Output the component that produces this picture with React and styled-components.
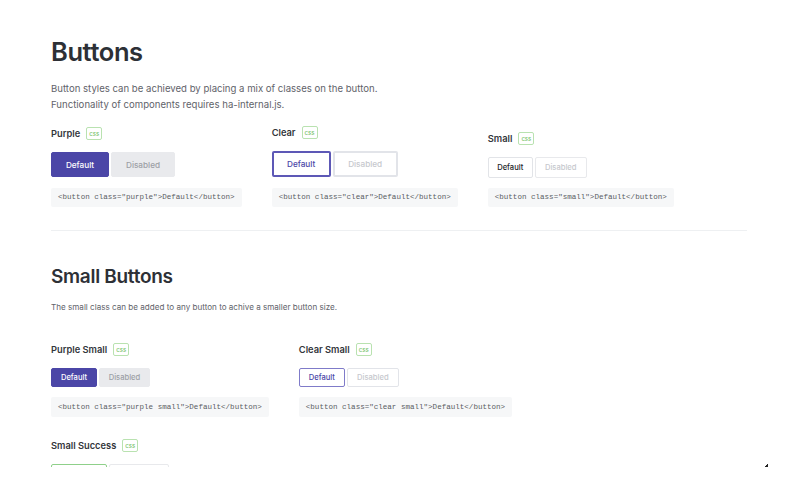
import styled, { createGlobalStyle, css } from 'styled-components';

const GlobalStyle = createGlobalStyle`
  * { box-sizing: border-box; }
  body {
    margin: 0;
    background: #ffffff;
    font-family: Inter, "Noto Sans", sans-serif;
    color: #2d3036;
  }
`;

const Frame = styled.div`
  position: relative;
  height: 467px;
  overflow: hidden;
  padding: 37px 51px 0;
`;

const Title = styled.h1`
  margin: 0 0 14px;
  font-size: 25.5px;
  line-height: 30px;
  font-weight: 600;
  letter-spacing: -0.4px;
  color: #2d3036;
`;

const Subtitle = styled.h2`
  margin: 34px 0 10px;
  font-size: 19px;
  line-height: 24px;
  font-weight: 600;
  letter-spacing: -0.3px;
  color: #2d3036;
`;

const Lead = styled.p`
  margin: 0 0 ${p => p.$after}px;
  font-size: ${p => p.$size}px;
  line-height: 16px;
  color: #5f636a;
`;

const Row = styled.div`
  display: flex;
  flex-wrap: wrap;
  align-items: flex-end;
  column-gap: 30px;
  row-gap: 21px;
`;

const Example = styled.div`
  display: flex;
  flex-direction: column;
  align-items: flex-start;
`;

const Label = styled.div`
  display: flex;
  align-items: center;
  gap: 6px;
  height: 14px;
  margin-bottom: 12px;
  font-size: 9.3px;
  font-weight: 600;
  color: #33363b;
`;

const Badge = styled.span`
  display: inline-flex;
  align-items: center;
  justify-content: center;
  width: 16px;
  height: 13px;
  border: 1px solid #b9e2b0;
  border-radius: 2px;
  font-size: 6px;
  font-weight: 500;
  color: #78c36b;
`;

const Group = styled.div`
  display: flex;
  gap: 2px;
  margin-bottom: ${p => p.$after}px;
`;

const sizes = {
  large: css`height: 25px; font-size: 8.2px;`,
  clear: css`height: 26px; font-size: 8.2px;`,
  small: css`height: 21px; font-size: 7.6px;`,
  tiny: css`height: 19px; font-size: 7.6px;`,
};

const variants = {
  purple: css`
    background: #4b46a7;
    color: #ffffff;
    border: 1px solid #4b46a7;
  `,
  purpleOff: css`
    background: #e9eaed;
    color: #9c9fa5;
    border: 1px solid #e9eaed;
  `,
  clear: css`
    background: #ffffff;
    color: #4b46a7;
    border: 2px solid #5d58b6;
  `,
  clearOff: css`
    background: #ffffff;
    color: #c6c8cd;
    border: 2px solid #e2e4e9;
  `,
  clearThin: css`
    background: #ffffff;
    color: #4b46a7;
    border: 1px solid #7f7bc9;
  `,
  clearThinOff: css`
    background: #ffffff;
    color: #c6c8cd;
    border: 1px solid #e2e4e9;
  `,
  plain: css`
    background: #ffffff;
    color: #222428;
    border: 1px solid #e2e4e8;
  `,
  plainOff: css`
    background: #ffffff;
    color: #c6c8cd;
    border: 1px solid #e8e9ec;
  `,
  success: css`
    background: #ffffff;
    color: #5bb15a;
    border: 1px solid #8fd08a;
  `,
};

const Button = styled.button`
  display: inline-flex;
  align-items: center;
  justify-content: center;
  width: ${p => p.$w}px;
  padding: 0;
  border-radius: 2px;
  font-family: Inter, "Noto Sans", sans-serif;
  font-weight: 500;
  cursor: pointer;
  ${p => sizes[p.$size]}
  ${p => variants[p.$variant]}
  &:disabled { cursor: default; }
`;

const Code = styled.code`
  display: block;
  height: ${p => p.$h}px;
  line-height: ${p => p.$h}px;
  padding: 0 7px;
  background: #f6f7f8;
  border-radius: 2px;
  font-family: "Liberation Mono", monospace;
  font-size: 7.55px;
  color: #5a5d63;
  white-space: pre;
`;

const Divider = styled.hr`
  margin: 23px 0 0;
  border: 0;
  border-top: 1px solid #eef0f2;
  width: 696px;
`;

const Grip = styled.span`
  position: absolute;
  left: 765px;
  top: 464px;
  width: 3px;
  height: 3px;
  background: linear-gradient(135deg, transparent 50%, #222 50%);
`;

const firstRow = [
  { name: 'Purple', size: 'large', on: 'purple', off: 'purpleOff', w: [58, 64], after: 11, code: '<button class="purple">Default</button>' },
  { name: 'Clear', size: 'clear', on: 'clear', off: 'clearOff', w: [59, 65], after: 11, code: '<button class="clear">Default</button>' },
  { name: 'Small', size: 'small', on: 'plain', off: 'plainOff', w: [45, 52], after: 10, code: '<button class="small">Default</button>' },
];

const secondRow = [
  { name: 'Purple Small', size: 'tiny', on: 'purple', off: 'purpleOff', w: [46, 51], after: 10, code: '<button class="purple small">Default</button>' },
  { name: 'Clear Small', size: 'tiny', on: 'clearThin', off: 'clearThinOff', w: [46, 52], after: 10, code: '<button class="clear small">Default</button>' },
  { name: 'Small Success', size: 'tiny', on: 'success', off: 'plainOff', w: [56, 60], after: 10, code: '<button class="success small">Default</button>' },
];

function ExampleBlock({ item, codeHeight }) {
  return (
    <Example>
      <Label>
        {item.name}
        <Badge>css</Badge>
      </Label>
      <Group $after={item.after}>
        <Button $size={item.size} $variant={item.on} $w={item.w[0]}>Default</Button>
        <Button $size={item.size} $variant={item.off} $w={item.w[1]} disabled>Disabled</Button>
      </Group>
      <Code $h={codeHeight}>{item.code}</Code>
    </Example>
  );
}

export default function App() {
  return (
    <>
      <GlobalStyle />
      <Frame>
        <Title>Buttons</Title>
        <Lead $size={9.6} $after={12}>
          Button styles can be achieved by placing a mix of classes on the button.
          <br />
          Functionality of components requires ha-internal.js.
        </Lead>
        <Row>
          {firstRow.map(item => (
            <ExampleBlock key={item.name} item={item} codeHeight={19} />
          ))}
        </Row>
        <Divider />
        <Subtitle>Small Buttons</Subtitle>
        <Lead $size={8.1} $after={27}>
          The small class can be added to any button to achive a smaller button size.
        </Lead>
        <Row>
          {secondRow.map(item => (
            <ExampleBlock key={item.name} item={item} codeHeight={20} />
          ))}
        </Row>
        <Grip />
      </Frame>
    </>
  );
}
